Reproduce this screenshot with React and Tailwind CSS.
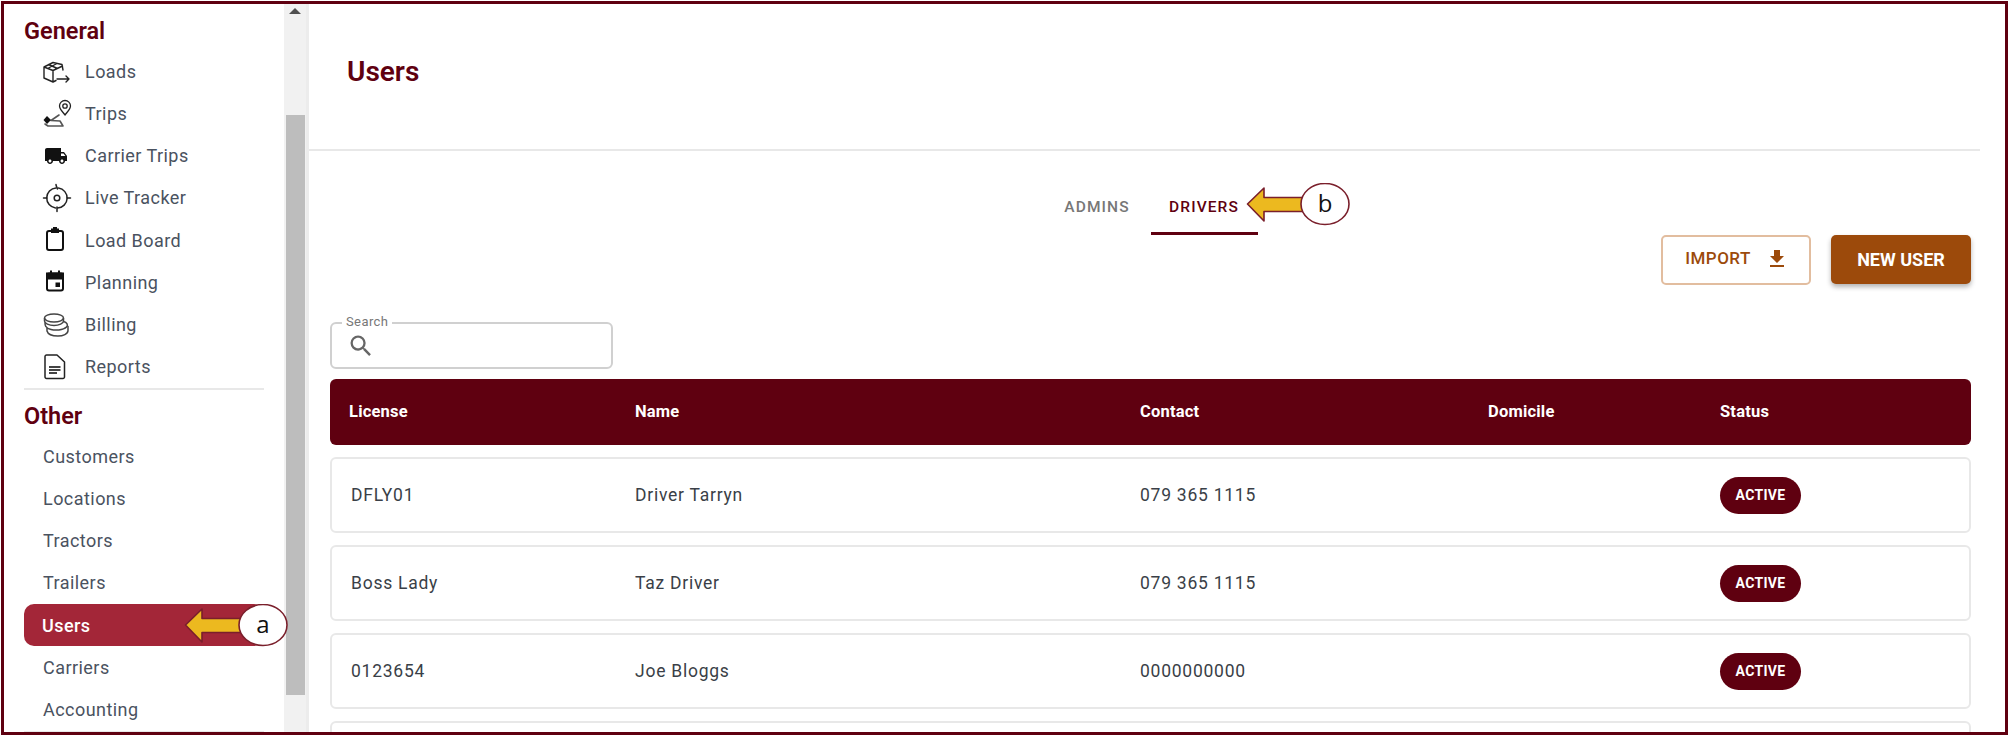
import React from 'react'
import { MdLocalShipping, MdFileDownload, MdSearch } from 'react-icons/md'

const maroon = 'text-[#5f0010]'

function LoadsIcon() {
    return (
        <svg viewBox="0 0 30 30" className="w-[30px] h-[30px]" fill="none" stroke="#222" strokeWidth="1.4" strokeLinejoin="round" strokeLinecap="round">
            <path d="M2 11 L11 6.5 L20 8.5 L21 14 M2 11 V22 L11 26 L14 24.5 M2 11 L11 14.5 V26 M11 14.5 L20.5 10 M6.5 8.5 L15.5 12.5 M15 7.5 L6.5 12" />
            <path d="M15 23 H27 M24 20 L27 23 L24 26" />
        </svg>
    )
}

function TripsIcon() {
    return (
        <svg viewBox="0 0 30 30" className="w-[30px] h-[30px]" fill="none" stroke="#222" strokeWidth="1.3" strokeLinecap="round" strokeLinejoin="round">
            <path d="M23 17 C20 13 17.5 11 17.5 8 A5.5 5.5 0 0 1 28.5 8 C28.5 11 26 13 23 17 Z" />
            <circle cx="23" cy="8" r="2.2" />
            <path d="M17 17 L9 22.5 L18 23 L21 28 L6 28 L3 26" stroke="#555" strokeWidth="1.6" />
            <path d="M5 18 L9 22 L5 26 L1.5 22 Z" fill="#111" stroke="none" />
        </svg>
    )
}

function TruckIcon() {
    return (
        <div className="w-[30px] h-[30px] flex items-center justify-center pr-[2px]">
            <MdLocalShipping size={24} color="#111" />
        </div>
    )
}

function TrackerIcon() {
    return (
        <svg viewBox="0 0 30 30" className="w-[30px] h-[30px]" fill="none" stroke="#222" strokeWidth="1.5" strokeLinecap="round">
            <path d="M16.5 5.1 A10 10 0 0 1 15.5 25 M13.5 24.9 A10 10 0 0 1 14 5" />
            <path d="M14 1.5 C14 3 15 4 15.5 6 M15 24 V28.5 M1.5 15 H5 M25 15 H28.5" />
            <circle cx="15" cy="15" r="2.8" />
        </svg>
    )
}

function ClipboardIcon() {
    return (
        <svg viewBox="0 0 30 30" className="w-[30px] h-[30px]" fill="none" stroke="#111" strokeWidth="2">
            <rect x="5" y="6" width="16" height="19" rx="2" />
            <path d="M9 3.5 H17 V8 H9 Z M11 2 H15 V4 H11 Z" fill="#111" stroke="none" />
        </svg>
    )
}

function CalendarIcon() {
    return (
        <svg viewBox="0 0 30 30" className="w-[30px] h-[30px]" fill="none" stroke="#111" strokeWidth="2">
            <rect x="5" y="6.5" width="16" height="17" rx="2" />
            <path d="M5 6.5 H21 V11.5 H5 Z" fill="#111" />
            <path d="M9 3.5 V7 M17 3.5 V7" />
            <rect x="13.5" y="15.5" width="4.5" height="4.5" fill="#111" stroke="none" />
        </svg>
    )
}

function CoinsIcon() {
    return (
        <svg viewBox="0 0 30 30" className="w-[30px] h-[30px]" fill="none" stroke="#444" strokeWidth="1.5">
            <ellipse cx="12" cy="8" rx="9.5" ry="4" />
            <path d="M2.5 8 V11 C2.5 13.5 7 15.5 12 15.5 C17 15.5 21.5 13.5 21.5 11 V8" />
            <path d="M3 12.5 C3 15 3 18 9 19.5 C13 20.5 21 20.5 24.5 17 C26.5 15 25 12.5 21.5 11.5" />
            <path d="M5 18 V21 C6 24.5 11 26 16 26 C21 26 26 24 26 20.5 V16" />
        </svg>
    )
}

function ReportIcon() {
    return (
        <svg viewBox="0 0 30 30" className="w-[30px] h-[30px]" fill="none" stroke="#222" strokeWidth="1.5" strokeLinejoin="round">
            <path d="M3 4.5 A1.5 1.5 0 0 1 4.5 3 H15 L22.5 10 V25 A1.5 1.5 0 0 1 21 26.5 H4.5 A1.5 1.5 0 0 1 3 25 Z" />
            <path d="M7 15 H18.5 M7 18 H18.5 M7 21 H15" stroke="#444" strokeWidth="2" />
        </svg>
    )
}

const generalItems = [
    ['Loads', LoadsIcon],
    ['Trips', TripsIcon],
    ['Carrier Trips', TruckIcon],
    ['Live Tracker', TrackerIcon],
    ['Load Board', ClipboardIcon],
    ['Planning', CalendarIcon],
    ['Billing', CoinsIcon],
    ['Reports', ReportIcon],
]

const otherItems = ['Customers', 'Locations', 'Tractors', 'Trailers', 'Users', 'Carriers', 'Accounting']

const drivers = [
    { license: 'DFLY01', name: 'Driver Tarryn', contact: '079 365 1115' },
    { license: 'Boss Lady', name: 'Taz Driver', contact: '079 365 1115' },
    { license: '0123654', name: 'Joe Bloggs', contact: '0000000000' },
]

function Sidebar() {
    return (
        <aside className="w-[280px] h-full shrink-0 overflow-hidden pl-[20px] pr-[20px]">
            <h2 className={`h-[26px] mt-[14px] mb-[6px] text-[23.5px] leading-[26px] font-semibold ${maroon}`}>General</h2>
            {generalItems.map(([label, Icon]) => (
                <div key={label} className="h-[42.25px] flex items-center pl-[18px] gap-[13px] text-[18px] tracking-[0.45px] text-[#4a5260]">
                    <Icon />
                    <span>{label}</span>
                </div>
            ))}
            <div className="h-[2px] bg-[#e8e8e8]" />
            <h2 className={`h-[26px] mt-[13px] mb-[6px] text-[23.5px] leading-[26px] font-semibold ${maroon}`}>Other</h2>
            {otherItems.map((label) =>
                label === 'Users' ? (
                    <div key={label} className="h-[42.25px] flex items-center pl-[18px] rounded-[10px] bg-[#a32638] text-[18px] tracking-[0.45px] font-medium text-white">
                        {label}
                    </div>
                ) : (
                    <div key={label} className="h-[42.25px] flex items-center pl-[19px] text-[18px] tracking-[0.45px] text-[#4a5260]">
                        {label}
                    </div>
                )
            )}
            <div className="h-[2px] bg-[#e8e8e8]" />
        </aside>
    )
}

function Scrollbar() {
    return (
        <div className="w-[22px] h-full shrink-0 bg-[#f1f1f1] border-r-[3px] border-[#ececec] box-content flex flex-col items-center">
            <div className="mt-[4px] w-0 h-0 border-l-[6px] border-r-[6px] border-b-[6px] border-l-transparent border-r-transparent border-b-[#505050]" />
            <div className="mt-[101px] w-[19px] h-[580px] bg-[#bdbdbd]" />
        </div>
    )
}

function Badge() {
    return (
        <span className="inline-flex items-center justify-center w-[81px] h-[37px] rounded-full bg-[#5f0010] text-white text-[14px] font-bold tracking-[0.3px]">
            ACTIVE
        </span>
    )
}

function UserRow({ license, name, contact }) {
    return (
        <div className="shrink-0 h-[76px] pl-[19px] grid grid-cols-[284px_505px_348px_232px_1fr] items-center rounded-[6px] border-2 border-[#e8e8e8] bg-white text-[17.5px] tracking-[0.75px] text-[#3a3f47]">
            <div>{license}</div>
            <div>{name}</div>
            <div>{contact}</div>
            <div />
            <div><Badge /></div>
        </div>
    )
}

function Callout({ letter, className }) {
    return (
        <svg viewBox="0 0 104 44" className={`absolute w-[104px] h-[44px] ${className}`}>
            <path d="M1.5 21 L18 5 V14.5 H60 V28.5 H18 V38 Z" fill="#ecb91f" stroke="#7a1f2b" strokeWidth="1.6" strokeLinejoin="round" />
            <ellipse cx="79" cy="21" rx="24" ry="20.5" fill="#fff" stroke="#7a1f2b" strokeWidth="1.6" />
            <text x="79" y="29" textAnchor="middle" fontSize="24" fill="#111" fontFamily="'Open Sans', sans-serif">{letter}</text>
        </svg>
    )
}

function Main() {
    return (
        <main className="flex-1 h-full overflow-hidden font-[Roboto,sans-serif]">
            <div className="w-[1671px] h-full">
                <div className="h-[147px] border-b-2 border-[#e8e8e8] pl-[38px] pt-[50px]">
                    <h1 className={`text-[28px] leading-[36px] font-semibold ${maroon}`}>Users</h1>
                </div>
                <div className="pl-[21px] pr-[9px]">
                    <div className="flex justify-center h-[84px] pt-[36px]">
                        <div className="w-[107px] h-[48px] pt-[8px] text-center text-[15.5px] leading-[24px] font-medium tracking-[1.1px] text-[#777]">ADMINS</div>
                        <div className="w-[107px] h-[48px] pt-[8px] text-center text-[15.5px] leading-[24px] font-medium tracking-[1.1px] text-[#5f0010] border-b-[3px] border-[#5f0010]">DRIVERS</div>
                    </div>
                    <div className="flex justify-end gap-[20px] h-[50px]">
                        <button className="w-[150px] h-[50px] pl-[2px] pb-[2px] rounded-[5px] border-2 border-[#e2bd9f] flex items-center justify-center gap-[14px] text-[#9c4a0b] text-[17px] font-medium tracking-[0.5px]">
                            IMPORT
                            <MdFileDownload size={24} />
                        </button>
                        <button className="w-[140px] h-[49px] rounded-[5px] bg-[#9c4a0b] text-white text-[18px] font-bold shadow-[0_3px_5px_rgba(0,0,0,0.3)]">
                            NEW USER
                        </button>
                    </div>
                    <div className="relative mt-[37px] w-[283px] h-[47px] rounded-[6px] border-2 border-[#d0d0d0] flex items-center pl-[15px]">
                        <span className="absolute -top-[9px] left-[10px] bg-white px-[4px] text-[13px] leading-[14px] tracking-[0.4px] text-[#777]">Search</span>
                        <MdSearch size={28} color="#666" />
                    </div>
                    <div className="mt-[10px] h-[66px] pl-[19px] pt-[1px] grid grid-cols-[286px_505px_348px_232px_1fr] items-center rounded-[6px] bg-[#5f0010] text-white text-[16.5px] font-bold tracking-[0.2px]">
                        <div>License</div>
                        <div>Name</div>
                        <div>Contact</div>
                        <div>Domicile</div>
                        <div>Status</div>
                    </div>
                    <div className="mt-[12px] flex flex-col gap-[12px]">
                        {drivers.map((d) => (
                            <UserRow key={d.license} {...d} />
                        ))}
                        <div className="shrink-0 h-[76px] rounded-[6px] border-2 border-[#e8e8e8]" />
                    </div>
                </div>
            </div>
        </main>
    )
}

export default function App() {
    return (
        <div className="w-[2010px] h-[737px] overflow-hidden bg-white pt-px pl-px font-[Roboto,sans-serif]">
            <div className="relative w-[2007px] h-[734px] border-[3px] border-[#5f0010] flex overflow-hidden">
                <Sidebar />
                <Scrollbar />
                <Main />
                <Callout letter="a" className="left-[180px] top-[600px]" />
                <Callout letter="b" className="left-[1242px] top-[179px]" />
            </div>
        </div>
    )
}
